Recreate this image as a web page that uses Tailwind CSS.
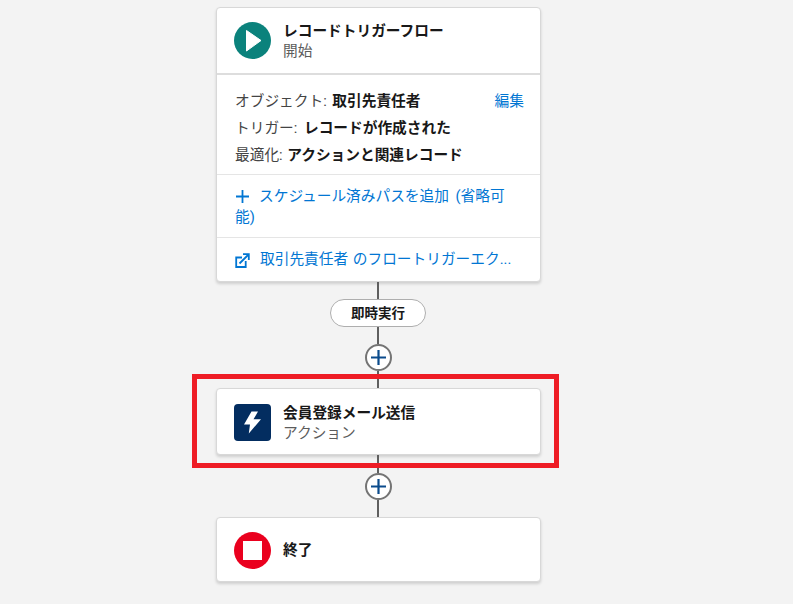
<!DOCTYPE html>
<html lang="ja">
<head>
<meta charset="utf-8">
<script src="https://cdn.jsdelivr.net/npm/@tailwindcss/browser@4"></script>
</head>
<body class="m-0 bg-[#f3f3f3] font-['Roboto','Noto_Sans_CJK_JP',sans-serif] text-[#181818]">
<div class="relative h-[604px] w-[793px] overflow-hidden">
  <div class="ml-[216px] flex w-[324px] flex-col items-center pt-[7px]">
    <!-- start card -->
    <div class="h-[275px] w-[325px] shrink-0 self-start overflow-hidden rounded-[4px] border border-[#d8d8d8] bg-white shadow-[0_2px_3px_rgba(0,0,0,0.15)]">
      <div class="flex h-[67px] items-center gap-[12px] border-b-2 border-[#dddddd] pl-[17px]">
        <svg class="shrink-0" width="37" height="37" viewBox="0 0 37 37"><circle cx="18.5" cy="18.5" r="18.5" fill="#0b827c"/><path d="M12.5 8.5 L27 18.5 L12.5 29 Z" fill="#fff" stroke="#fff" stroke-linejoin="round"/></svg>
        <div class="flex flex-col">
          <span class="text-[14.7px] font-bold leading-[20px]">レコードトリガーフロー</span>
          <span class="text-[14.7px] leading-[20px] text-[#5c5c5c]">開始</span>
        </div>
      </div>
      <div class="relative flex h-[100px] flex-col gap-[7px] border-b border-[#e5e5e5] pl-[18px] pt-[16px] text-[14.7px] leading-[20px] text-[#444444]">
        <div>オブジェクト: <b class="ml-[2px] font-bold text-[#181818]">取引先責任者</b></div>
        <div>トリガー: <b class="ml-[3px] font-bold text-[#181818]">レコードが作成された</b></div>
        <div>最適化: <b class="ml-[1px] font-bold text-[#181818]">アクションと関連レコード</b></div>
        <span class="absolute right-[16px] top-[16px] text-[#0176d3]">編集</span>
      </div>
      <div class="h-[63px] border-b border-[#e5e5e5] pl-[18px] pr-[30px] pt-[11px] text-[14.7px] leading-[21px] text-[#0176d3] [word-spacing:3px]">
        <svg class="mr-[7px] inline-block align-[-3px]" width="15" height="15" viewBox="0 0 15 15"><path d="M7.5 1v13M1 7.5h13" stroke="#0176d3" stroke-width="1.8"/></svg><span class="ml-[2px]">スケジュール済みパスを追加 (省略可能)</span>
      </div>
      <div class="flex items-center gap-[10px] pl-[18px] pt-[11px] text-[14.7px] leading-[21px] text-[#0176d3] [word-spacing:1px]">
        <svg class="mt-[2px] shrink-0" width="15" height="15" viewBox="0 0 15 15" fill="none" stroke="#0176d3" stroke-width="1.8"><path d="M7 4.5H1.2v9.5h9.5V8"/><path d="M4.5 10.5 13.5 1.5"/><path d="M8 1.2h5.8V7"/></svg>
        <span>取引先責任者 のフロートリガーエク...</span>
      </div>
    </div>

    <div class="h-[17px] w-[2px] bg-[#5f5f5f]"></div>
    <div class="flex h-[28px] w-[96px] items-center justify-center rounded-full border border-[#aeaeae] bg-white text-[13.5px] font-bold">即時実行</div>
    <div class="h-[17px] w-[2px] bg-[#5f5f5f]"></div>
    <div class="flex h-[27px] w-[27px] items-center justify-center rounded-full border-2 border-[#747474] bg-white">
      <svg width="17" height="17" viewBox="0 0 17 17"><path d="M8.5 1v15M1 8.5h15" stroke="#0b4b8c" stroke-width="2.2"/></svg>
    </div>
    <div class="h-[17px] w-[2px] bg-[#5f5f5f]"></div>

    <!-- action card -->
    <div class="flex h-[67px] w-[325px] shrink-0 items-center gap-[12px] self-start rounded-[4px] border border-[#d8d8d8] bg-white pl-[17px] pt-[2px] shadow-[0_2px_3px_rgba(0,0,0,0.15)]">
      <svg class="shrink-0" width="37" height="37" viewBox="0 0 37 37"><rect width="37" height="37" rx="4" fill="#032d60"/><path d="M17.5 7.5H24L19.5 15.3H27L14.8 29.5 16 20.5H10Z" fill="#fff"/></svg>
      <div class="flex flex-col">
        <span class="text-[14.7px] font-bold leading-[20px]">会員登録メール送信</span>
        <span class="text-[14.7px] leading-[20px] text-[#5c5c5c]">アクション</span>
      </div>
    </div>

    <div class="h-[18px] w-[2px] bg-[#5f5f5f]"></div>
    <div class="flex h-[27px] w-[27px] items-center justify-center rounded-full border-2 border-[#747474] bg-white">
      <svg width="17" height="17" viewBox="0 0 17 17"><path d="M8.5 1v15M1 8.5h15" stroke="#0b4b8c" stroke-width="2.2"/></svg>
    </div>
    <div class="h-[17px] w-[2px] bg-[#5f5f5f]"></div>

    <!-- end card -->
    <div class="flex h-[65px] w-[325px] shrink-0 items-center gap-[12px] self-start rounded-[4px] border border-[#d8d8d8] bg-white pl-[17px] pt-[2px] shadow-[0_2px_3px_rgba(0,0,0,0.15)]">
      <svg class="shrink-0" width="37" height="37" viewBox="0 0 37 37"><circle cx="18.5" cy="18.5" r="18.5" fill="#ea001e"/><rect x="9" y="9" width="19" height="19" fill="#fff"/></svg>
      <span class="text-[14.7px] font-bold">終了</span>
    </div>
  </div>
  <!-- highlight annotation -->
  <div class="absolute left-[192px] top-[374px] h-[94px] w-[367px] border-[5px] border-[#ee1c25]"></div>
</div>
</body>
</html>
